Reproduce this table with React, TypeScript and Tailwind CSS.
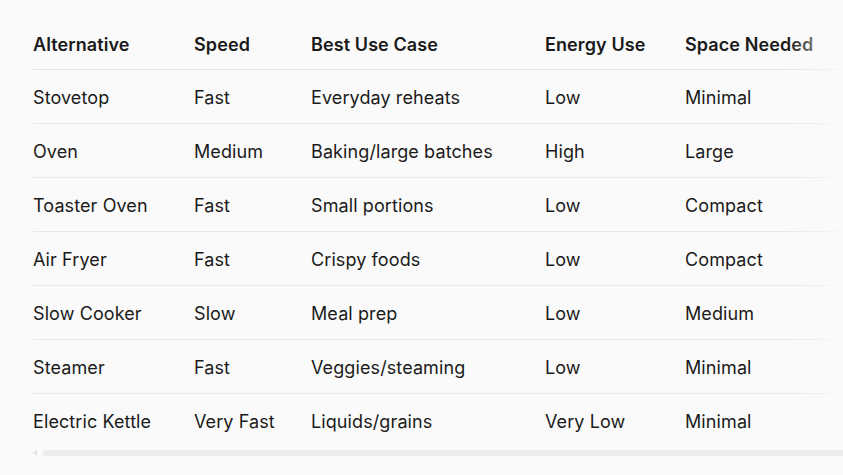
import React from "react";

const rows = [
  ["Stovetop", "Fast", "Everyday reheats", "Low", "Minimal"],
  ["Oven", "Medium", "Baking/large batches", "High", "Large"],
  ["Toaster Oven", "Fast", "Small portions", "Low", "Compact"],
  ["Air Fryer", "Fast", "Crispy foods", "Low", "Compact"],
  ["Slow Cooker", "Slow", "Meal prep", "Low", "Medium"],
  ["Steamer", "Fast", "Veggies/steaming", "Low", "Minimal"],
  ["Electric Kettle", "Very Fast", "Liquids/grains", "Very Low", "Minimal"],
];
const headers = ["Alternative", "Speed", "Best Use Case", "Energy Use", "Space Needed"];
const cols = "grid grid-cols-[161px_117px_234px_140px_200px]";

export default function App() {
  return (
    <div className="w-[843px] h-[475px] bg-[#fafafa] overflow-hidden text-[#1a1a1a]" style={{ fontFamily: "Inter, 'Noto Sans', sans-serif" }}>
      <div className="relative pl-[33px] pt-[17px]">
        <div className="w-[852px]">
          <div className={`${cols} h-[53px] items-center pt-[3px] border-b border-[#e3e3e3] text-[18px] font-semibold tracking-[0.1px]`}>
            {headers.map((h) => (
              <div key={h} className="whitespace-nowrap">{h}</div>
            ))}
          </div>
          {rows.map((r, i) => (
            <div key={i} className={`${cols} h-[54px] items-center pt-[1px] text-[18px] tracking-[0.1px] ${i < rows.length - 1 ? "border-b border-[#e8e8e8]" : ""}`}>
              {r.map((c, j) => (
                <div key={j} className="whitespace-nowrap">{c}</div>
              ))}
            </div>
          ))}
        </div>
        <div className="pointer-events-none absolute top-0 right-0 h-full w-[56px] bg-gradient-to-r from-[#fafafa]/0 to-[#fafafa]/85" />
      </div>
      <div className="flex items-center pl-[33px] mt-[2px] gap-[6px]">
        <div className="w-0 h-0 border-y-[3px] border-y-transparent border-r-[4px] border-r-[#e2e2e2]" />
        <div className="flex-1 h-[6px] rounded-l-full bg-[#ececec]" />
      </div>
    </div>
  );
}
